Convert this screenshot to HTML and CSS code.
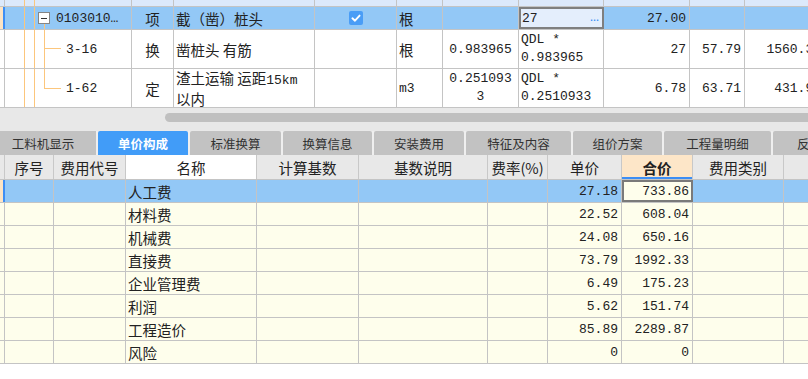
FILE: index.html
```html
<!DOCTYPE html>
<html lang="zh-CN">

<head>
    <meta charset="UTF-8">
    <title>单价构成</title>
    <link rel="stylesheet" href="styles.css">
</head>

<body>
    <div class="page">
        <!-- 定额列表 -->
        <div class="top">
            <div class="row r-prev">
                <div class="c g"></div>
                <div class="c tree"></div>
                <div class="c"></div>
                <div class="c"></div>
                <div class="c"></div>
                <div class="c"></div>
                <div class="c"></div>
                <div class="c"></div>
                <div class="c"></div>
                <div class="c"></div>
                <div class="c"></div>
            </div>
            <div class="row r-sel">
                <div class="c g"></div>
                <div class="c tree t-sel"><span class="box"></span><span class="code">0103010…</span></div>
                <div class="c m cn">项</div>
                <div class="c l cn">截（凿）桩头</div>
                <div class="c m"><span class="check"><svg width="14" height="14" viewBox="0 0 14 14"><path d="M3.4 7.3 L6 9.7 L10.6 4.6" fill="none" stroke="#fff" stroke-width="1.9" stroke-linecap="round" stroke-linejoin="round"/></svg></span></div>
                <div class="c l cn">根</div>
                <div class="c"></div>
                <div class="c edit"><span class="val">27</span><span class="more">…</span></div>
                <div class="c r">27.00</div>
                <div class="c"></div>
                <div class="c"></div>
            </div>
            <div class="row r-kid">
                <div class="c g"></div>
                <div class="c tree t-kid1"><span class="code kid">3-16</span></div>
                <div class="c m cn">换</div>
                <div class="c l cn">凿桩头 有筋</div>
                <div class="c"></div>
                <div class="c l cn">根</div>
                <div class="c m">0.983965</div>
                <div class="c l"><span class="two">QDL *<br>0.983965</span></div>
                <div class="c r">27</div>
                <div class="c r">57.79</div>
                <div class="c r">1560.33</div>
            </div>
            <div class="row r-kid">
                <div class="c g"></div>
                <div class="c tree t-kid2"><span class="code kid">1-62</span></div>
                <div class="c m cn">定</div>
                <div class="c l cn"><span class="two">渣土运输 运距<span class="num">15km</span><br>以内</span></div>
                <div class="c"></div>
                <div class="c l">m3</div>
                <div class="c m"><span class="two">0.251093<br>3</span></div>
                <div class="c l"><span class="two">QDL *<br>0.2510933</span></div>
                <div class="c r">6.78</div>
                <div class="c r">63.71</div>
                <div class="c r">431.95</div>
            </div>
        </div>

        <!-- 横向滚动条 -->
        <div class="hscroll">
            <div class="thumb"></div>
        </div>

        <!-- 页签 -->
        <div class="tabs">
            <div class="tab first">工料机显示</div>
            <div class="tab active">单价构成</div>
            <div class="tab w91">标准换算</div>
            <div class="tab w89">换算信息</div>
            <div class="tab">安装费用</div>
            <div class="tab w105">特征及内容</div>
            <div class="tab w89">组价方案</div>
            <div class="tab w107">工程量明细</div>
            <div class="tab last">反查图形工程量</div>
        </div>

        <!-- 单价构成 -->
        <div class="bottom">
            <div class="row head">
                <div class="c"></div>
                <div class="c m">序号</div>
                <div class="c m">费用代号</div>
                <div class="c m white">名称</div>
                <div class="c m">计算基数</div>
                <div class="c m">基数说明</div>
                <div class="c m">费率(%)</div>
                <div class="c m">单价</div>
                <div class="c m sum">合价</div>
                <div class="c m">费用类别</div>
                <div class="c"></div>
            </div>
            <div class="row b-row b-sel">
                <div class="c g"></div>
                <div class="c"></div>
                <div class="c"></div>
                <div class="c l cn">人工费</div>
                <div class="c"></div>
                <div class="c"></div>
                <div class="c"></div>
                <div class="c r">27.18</div>
                <div class="c r cur">733.86</div>
                <div class="c"></div>
                <div class="c"></div>
            </div>
            <div class="row b-row">
                <div class="c g"></div>
                <div class="c"></div>
                <div class="c"></div>
                <div class="c l cn">材料费</div>
                <div class="c"></div>
                <div class="c"></div>
                <div class="c"></div>
                <div class="c r">22.52</div>
                <div class="c r">608.04</div>
                <div class="c"></div>
                <div class="c"></div>
            </div>
            <div class="row b-row">
                <div class="c g"></div>
                <div class="c"></div>
                <div class="c"></div>
                <div class="c l cn">机械费</div>
                <div class="c"></div>
                <div class="c"></div>
                <div class="c"></div>
                <div class="c r">24.08</div>
                <div class="c r">650.16</div>
                <div class="c"></div>
                <div class="c"></div>
            </div>
            <div class="row b-row">
                <div class="c g"></div>
                <div class="c"></div>
                <div class="c"></div>
                <div class="c l cn">直接费</div>
                <div class="c"></div>
                <div class="c"></div>
                <div class="c"></div>
                <div class="c r">73.79</div>
                <div class="c r">1992.33</div>
                <div class="c"></div>
                <div class="c"></div>
            </div>
            <div class="row b-row">
                <div class="c g"></div>
                <div class="c"></div>
                <div class="c"></div>
                <div class="c l cn">企业管理费</div>
                <div class="c"></div>
                <div class="c"></div>
                <div class="c"></div>
                <div class="c r">6.49</div>
                <div class="c r">175.23</div>
                <div class="c"></div>
                <div class="c"></div>
            </div>
            <div class="row b-row">
                <div class="c g"></div>
                <div class="c"></div>
                <div class="c"></div>
                <div class="c l cn">利润</div>
                <div class="c"></div>
                <div class="c"></div>
                <div class="c"></div>
                <div class="c r">5.62</div>
                <div class="c r">151.74</div>
                <div class="c"></div>
                <div class="c"></div>
            </div>
            <div class="row b-row">
                <div class="c g"></div>
                <div class="c"></div>
                <div class="c"></div>
                <div class="c l cn">工程造价</div>
                <div class="c"></div>
                <div class="c"></div>
                <div class="c"></div>
                <div class="c r">85.89</div>
                <div class="c r">2289.87</div>
                <div class="c"></div>
                <div class="c"></div>
            </div>
            <div class="row b-row">
                <div class="c g"></div>
                <div class="c"></div>
                <div class="c"></div>
                <div class="c l cn">风险</div>
                <div class="c"></div>
                <div class="c"></div>
                <div class="c"></div>
                <div class="c r">0</div>
                <div class="c r">0</div>
                <div class="c"></div>
                <div class="c"></div>
            </div>
        </div>
    </div>
</body>

</html>
```

FILE: styles.css
```css
* {
    margin: 0;
    padding: 0;
    box-sizing: border-box;
}

body {
    background: #fff;
    font-family: "Liberation Mono", "Noto Sans CJK SC", monospace;
    font-size: 13px;
    color: #222;
}

.page {
    width: 808px;
    height: 379px;
    overflow: hidden;
}

/* 表格通用 */
.row {
    display: grid;
    border-bottom: 1px solid #c4c4c4;
}

.c {
    display: flex;
    align-items: center;
    overflow: hidden;
    white-space: nowrap;
    border-right: 1px solid #c4c4c4;
}

.l {
    padding-left: 2px;
}

.r {
    justify-content: flex-end;
    padding-right: 3px;
}

.m {
    justify-content: center;
    text-align: center;
}

.cn {
    font-family: "Noto Sans CJK SC", sans-serif;
    font-size: 14.5px;
}

.num {
    font-family: "Liberation Mono", monospace;
    font-size: 13px;
}

.two {
    display: block;
    line-height: 18px;
}

/* 上方定额表 */
.top .row {
    width: 825px;
    grid-template-columns: 5px 127px 42px 141px 82px 46px 76px 85px 86px 55px 80px;
}

.r-prev {
    height: 7px;
    background: #dce9fb;
}

.r-sel {
    height: 23px;
    background: #93c8f6;
}

.r-kid {
    height: 39px;
    background: #fff;
}

.r-sel .g {
    background: #fde4c4;
    border-right: 2px solid #3d8ef5;
}

.tree {
    background-image: linear-gradient(#fcc67c, #fcc67c), linear-gradient(#fcc67c, #fcc67c);
    background-repeat: no-repeat;
    background-size: 1px 100%, 1px 100%;
    background-position: 19px 0, 29px 0;
}

.t-sel {
    padding-left: 33px;
    background-image: linear-gradient(#fcc67c, #fcc67c), linear-gradient(#fcc67c, #fcc67c), linear-gradient(#fcc67c, #fcc67c);
    background-size: 1px 100%, 1px 100%, 1px 7px;
    background-position: 19px 0, 29px 0, 39px 16px;
}

.t-kid1 {
    background-image: linear-gradient(#fcc67c, #fcc67c), linear-gradient(#fcc67c, #fcc67c), linear-gradient(#fcc67c, #fcc67c), linear-gradient(#fcc67c, #fcc67c);
    background-size: 1px 100%, 1px 100%, 1px 100%, 17px 1px;
    background-position: 19px 0, 29px 0, 39px 0, 39px 18px;
}

.t-kid2 {
    background-image: linear-gradient(#fcc67c, #fcc67c), linear-gradient(#fcc67c, #fcc67c), linear-gradient(#fcc67c, #fcc67c), linear-gradient(#fcc67c, #fcc67c);
    background-size: 1px 100%, 1px 100%, 1px 20px, 17px 1px;
    background-position: 19px 0, 29px 0, 39px 0, 39px 19px;
}

.box {
    width: 12px;
    height: 12px;
    border: 1px solid #858585;
    background: linear-gradient(#333, #333) center / 6px 1px no-repeat, #fff;
    margin-right: 6px;
    flex-shrink: 0;
}

.code.kid {
    padding-left: 61px;
}

.check {
    width: 14px;
    height: 14px;
    border-radius: 2px;
    background: #4a9df6;
    display: flex;
}

.edit {
    justify-content: space-between;
    padding: 0 4px 0 3px;
    background: #e4eefc;
    outline: 2px solid #7f7f7f;
    outline-offset: -2px;
}

.edit .more {
    color: #3d8ef5;
    font-size: 15px;
    line-height: 10px;
}

/* 横向滚动条 */
.hscroll {
    height: 23px;
    background: #e8e8e8;
    padding: 5px 0 0 165px;
}

.thumb {
    width: 700px;
    height: 9px;
    background: #c0c0c0;
    border-radius: 5px 0 0 5px;
}

/* 页签 */
.tabs {
    display: flex;
    gap: 2px;
    height: 24px;
    background: #efefef;
}

.tab {
    flex-shrink: 0;
    width: 90px;
    display: flex;
    align-items: center;
    justify-content: center;
    background: #c2c2c2;
    border-radius: 2px 2px 0 0;
    font-family: "Noto Sans CJK SC", sans-serif;
    font-size: 12.5px;
    color: #333;
}

.tab.first {
    width: 96px;
    padding-right: 10px;
    border-radius: 0;
}

.tab.active {
    background: #419cf8;
    color: #fff;
    font-weight: bold;
}

.tab.w91 {
    width: 91px;
}

.tab.w89 {
    width: 89px;
}

.tab.w105 {
    width: 105px;
}

.tab.w107 {
    width: 107px;
}

.tab.last {
    width: 130px;
    justify-content: flex-start;
    padding-left: 24px;
}

/* 下方单价构成表 */
.bottom .row {
    width: 824px;
    grid-template-columns: 5px 49px 72px 131px 102px 129px 60px 74px 71px 91px 40px;
}

.head {
    height: 25px;
    background: #e8e8e8;
    font-family: "Noto Sans CJK SC", sans-serif;
    font-size: 14.5px;
}

.head .c {
    border-right-color: #c8c8c8;
}

.head .white {
    background: #fff;
}

.head .sum {
    background: #fde6c8;
    font-weight: bold;
    box-shadow: inset 0 -2px #3d8ef5;
}

.b-row {
    height: 23px;
    background: #fefeec;
}

.b-sel {
    background: #93c8f6;
}

.b-sel .g {
    background: #fde4c4;
    border-right: 2px solid #3d8ef5;
}

.b-sel .cur {
    background: #fefeec;
    outline: 2px solid #7a7a7a;
    outline-offset: -2px;
}
```
